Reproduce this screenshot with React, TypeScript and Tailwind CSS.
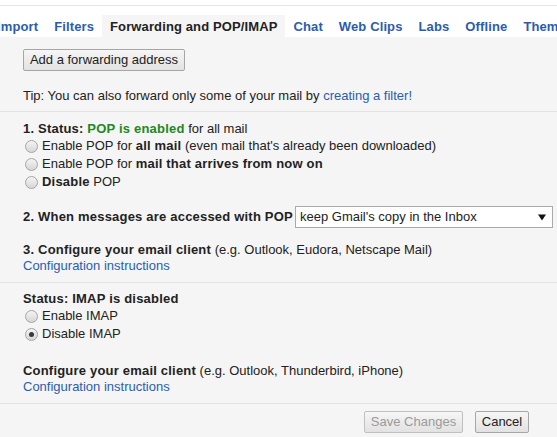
import React from "react";

const font = { fontFamily: '"Liberation Sans", Arial, sans-serif' };

function Radio({ checked }: { checked?: boolean }) {
  return (
    <span className="inline-flex items-center justify-center w-[13px] h-[13px] rounded-full border border-[#a5a5a5] bg-gradient-to-b from-[#f4f4f4] to-[#d6d6d6] mr-[4px] shrink-0">
      {checked && <span className="w-[5px] h-[5px] rounded-full bg-[#3a3a3a]" />}
    </span>
  );
}

function Btn({ children, disabled, className = "" }: { children: React.ReactNode; disabled?: boolean; className?: string }) {
  return (
    <div
      className={
        "h-[22px] flex items-center justify-center border rounded-[2px] bg-gradient-to-b from-[#f6f6f6] to-[#e2e2e2] text-[13px] " +
        (disabled ? "border-[#c0c0c0] text-[#9a9a9a] " : "border-[#a6a6a6] text-[#222] ") +
        className
      }
    >
      {children}
    </div>
  );
}

function B({ children, className = "" }: { children: React.ReactNode; className?: string }) {
  return <b className={"font-bold tracking-[0.2px] " + className}>{children}</b>;
}

export default function App() {
  const tabs = ["Import", "Filters", "Forwarding and POP/IMAP", "Chat", "Web Clips", "Labs", "Offline", "Themes"];
  return (
    <div className="w-[557px] h-[437px] overflow-hidden bg-[#f5f5f5] text-[#222] text-[13px]" style={font}>
      <div className="bg-white">
        <div className="h-[6px] border-b border-[#e5e5e5]" />
        <div className="h-[9px]" />
        <div className="h-[22px] pt-[1px] flex items-stretch -ml-[11px] whitespace-nowrap">
          {tabs.map((t) => {
            const active = t === "Forwarding and POP/IMAP";
            return (
              <div
                key={t}
                className={
                  "px-[8px] flex items-center font-bold tracking-[0.12px] text-[13px] " +
                  (active ? "bg-[#f5f5f5] text-[#222] -mt-[1px] pt-[1px]" : "text-[#2a5db0]")
                }
              >
                {t}
              </div>
            );
          })}
        </div>
      </div>

      <div className="pl-[23px] pt-[12px]">
        <Btn className="w-[162px]">Add a forwarding address</Btn>
        <div className="mt-[16px] leading-[17px]">
          Tip: You can also forward only some of your mail by{" "}
          <span className="text-[#2a5db0]">creating a filter!</span>
        </div>
      </div>
      <div className="mt-[7px] border-b border-[#e2e2e2]" />

      <div className="pl-[23px] pt-[8px]">
        <div className="leading-[17px]">
          <B>1. Status: </B>
          <B className="text-[#228822]">POP is enabled</B> for all mail
        </div>
        <div className="h-[18px] flex items-center pl-[2px]">
          <Radio />
          <span>
            Enable POP for <B>all mail</B> (even mail that's already been downloaded)
          </span>
        </div>
        <div className="h-[18px] flex items-center pl-[2px]">
          <Radio />
          <span>
            Enable POP for <B>mail that arrives from now on</B>
          </span>
        </div>
        <div className="h-[18px] flex items-center pl-[2px]">
          <Radio />
          <span>
            <B>Disable</B> POP
          </span>
        </div>

        <div className="mt-[15px] h-[22px] flex items-center pr-[4px]">
          <B>2. When messages are accessed with POP</B>
          <div className="ml-auto w-[258px] h-[22px] border border-[#a9a9a9] bg-white flex items-center pl-[4px] pr-[6px] justify-between">
            <span>keep Gmail's copy in the Inbox</span>
            <svg width="8" height="7" viewBox="0 0 8 7">
              <path d="M0 0.5 L8 0.5 L4 6.5 Z" fill="#111" />
            </svg>
          </div>
        </div>

        <div className="mt-[14px] leading-[16px]">
          <B>3. Configure your email client</B> (e.g. Outlook, Eudora, Netscape Mail)
        </div>
        <div className="leading-[16px] text-[#2a5db0]">Configuration instructions</div>
      </div>
      <div className="mt-[8px] border-b border-[#e2e2e2]" />

      <div className="pl-[23px] pt-[8px]">
        <div className="leading-[16px]">
          <B>Status: IMAP is disabled</B>
        </div>
        <div className="h-[18px] flex items-center pl-[2px]">
          <Radio />
          <span>Enable IMAP</span>
        </div>
        <div className="h-[18px] flex items-center pl-[2px]">
          <Radio checked />
          <span>Disable IMAP</span>
        </div>
        <div className="mt-[20px] leading-[16px]">
          <B>Configure your email client</B> (e.g. Outlook, Thunderbird, iPhone)
        </div>
        <div className="leading-[16px] text-[#2a5db0]">Configuration instructions</div>
      </div>
      <div className="mt-[8px] border-b border-[#e2e2e2]" />

      <div className="flex justify-end gap-[12px] pr-[28px] pt-[7px]">
        <Btn disabled className="w-[99px]">Save Changes</Btn>
        <Btn className="w-[54px]">Cancel</Btn>
      </div>
    </div>
  );
}
